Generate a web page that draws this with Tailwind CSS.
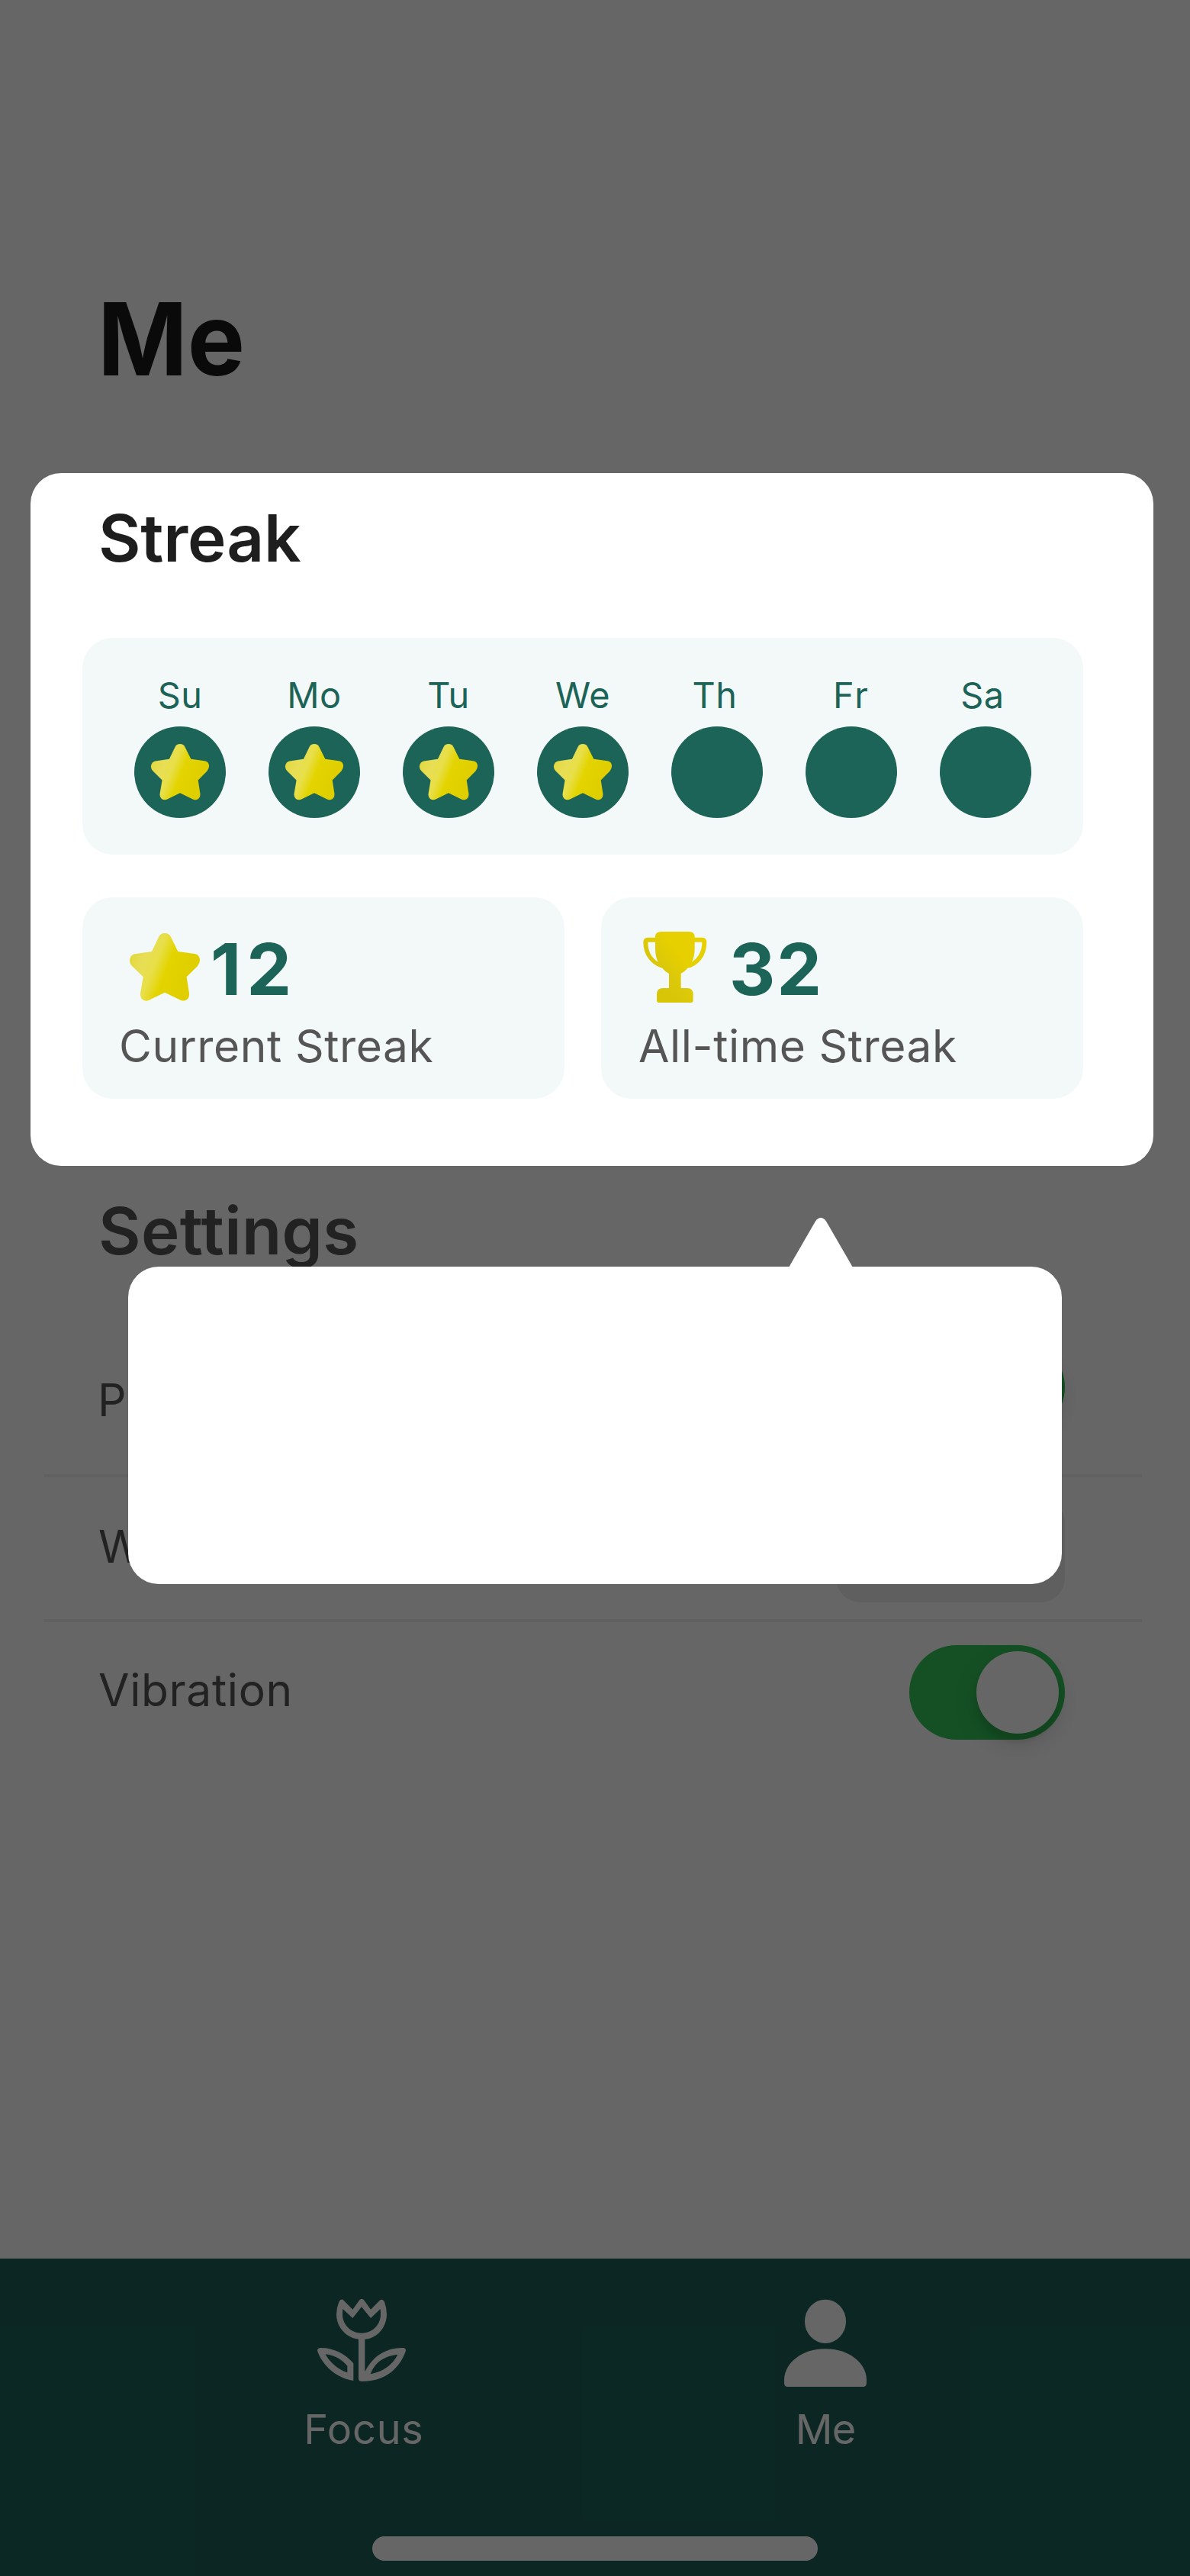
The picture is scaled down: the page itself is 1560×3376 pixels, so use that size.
<!DOCTYPE html>
<html lang="en">
<head>
<meta charset="utf-8">
<title>Me</title>
<script src="https://cdn.jsdelivr.net/npm/@tailwindcss/browser@4"></script>
</head>
<body class="bg-white">
<svg class="absolute size-0" aria-hidden="true">
  <defs>
    <linearGradient id="starFill" gradientUnits="userSpaceOnUse" x1="70" y1="110" x2="320" y2="210">
      <stop offset="0" stop-color="#e3d83c"/>
      <stop offset=".2" stop-color="#e7de56"/>
      <stop offset=".38" stop-color="#e8df48"/>
      <stop offset=".56" stop-color="#e3d400"/>
      <stop offset="1" stop-color="#dfcd00"/>
    </linearGradient>
    <linearGradient id="cupFill" gradientUnits="userSpaceOnUse" x1="185" y1="270" x2="290" y2="190">
      <stop offset="0" stop-color="#d9c508"/>
      <stop offset=".4" stop-color="#dbc80a"/>
      <stop offset="1" stop-color="#e6d000"/>
    </linearGradient>
    <path id="star" fill="url(#starFill)" d="M174 54Q181 39 198 39Q215 39 222 54L250 111L316 120Q333 123 336 141Q337 156 327 168L284 211L294 276Q295 294 284 301Q270 308 257 301L198 272L139 301Q124 309 112 301Q101 293 102 276L113 211L69 168Q58 156 60 143Q64 124 80 121L147 111Z"/>
  </defs>
</svg>

<div class="relative flex h-[3376px] w-[1560px] flex-col overflow-hidden bg-white font-['Inter',sans-serif]">
  <main class="flex h-[2960px] flex-col">
    <h1 class="mt-[364px] ml-32 h-40 w-fit origin-left scale-x-[.958] text-[132px] leading-[160px] font-bold text-[#1a1a1a]">Me</h1>

    <section class="relative z-20 mt-24 ml-10 h-[908px] w-[1472px] rounded-[40px] bg-white pt-[33px] pl-17">
      <h2 class="ml-[21px] text-[85.3px] leading-[104px] font-semibold tracking-[-.16px] text-[#1e1e1e]">Streak</h2>

      <div class="mt-[79px] flex h-[284px] w-[1312px] gap-14 rounded-[40px] bg-[#f3f9f8] pt-[47px] pl-17 text-[46.8px] leading-14 tracking-[.5px] text-[#1c6358]">
        <div class="flex w-30 flex-col items-center gap-[13px]"><span>Su</span><span class="size-30 rounded-full bg-[#1c6358]"><svg class="size-30" viewBox="-19.8 -44.5 435.6 435.6"><use href="#star"/></svg></span></div>
        <div class="flex w-30 flex-col items-center gap-[13px]"><span>Mo</span><span class="size-30 rounded-full bg-[#1c6358]"><svg class="size-30" viewBox="-19.8 -44.5 435.6 435.6"><use href="#star"/></svg></span></div>
        <div class="flex w-30 flex-col items-center gap-[13px]"><span>Tu</span><span class="size-30 rounded-full bg-[#1c6358]"><svg class="size-30" viewBox="-19.8 -44.5 435.6 435.6"><use href="#star"/></svg></span></div>
        <div class="flex w-30 flex-col items-center gap-[13px]"><span>We</span><span class="size-30 rounded-full bg-[#1c6358]"><svg class="size-30" viewBox="-19.8 -44.5 435.6 435.6"><use href="#star"/></svg></span></div>
        <div class="flex w-30 flex-col items-center gap-[13px]"><span class="mr-1.5">Th</span><span class="size-30 rounded-full bg-[#1c6358]"></span></div>
        <div class="flex w-30 flex-col items-center gap-[13px]"><span class="tracking-[2px]">Fr</span><span class="size-30 rounded-full bg-[#1c6358]"></span></div>
        <div class="flex w-30 flex-col items-center gap-[13px]"><span class="mr-2">Sa</span><span class="size-30 rounded-full bg-[#1c6358]"></span></div>
      </div>

      <div class="mt-14 grid w-[1312px] grid-cols-2 gap-12">
        <div class="h-[264px] rounded-[40px] bg-[#f3f9f8] pt-[38px] pl-12">
          <div class="flex items-center">
            <svg class="size-30 -my-1" viewBox="18 0 360 360"><use href="#star"/></svg>
            <span class="text-[93.5px] leading-28 font-bold tracking-[7px] text-[#1c6358]">12</span>
          </div>
          <p class="mt-[9px] text-[58.7px] leading-18 tracking-[.58px] text-[#555]">Current Streak</p>
        </div>
        <div class="h-[264px] rounded-[40px] bg-[#f3f9f8] pt-[38px] pl-12">
          <div class="flex items-center">
            <svg class="size-30 -my-1" viewBox="108 45 360 360"><path fill="url(#cupFill)" fill-rule="evenodd" d="M177 98Q177 78 200 78H310Q332 78 332 98V101H362Q379 101 379 119Q379 160 357 188Q335 215 303 222Q293 236 278 243V300H302Q326 300 326 325V348Q326 357 317 357H192Q183 357 183 348V325Q183 300 207 300H231V243Q215 236 206 222Q172 212 152 186Q130 158 130 119Q130 101 148 101H177ZM148 119H177V145Q177 175 188 197Q148 172 148 119ZM332 119H361Q361 170 321 197Q332 175 332 145Z"/></svg>
            <span class="text-[93.5px] leading-28 font-bold tracking-[2px] text-[#1c6358]">32</span>
          </div>
          <p class="mt-[9px] ml-px text-[58.7px] leading-18 tracking-[.56px] text-[#555]">All-time Streak</p>
        </div>
      </div>
    </section>

    <h2 class="mt-[33px] ml-[129px] text-[85.3px] leading-[104px] font-semibold tracking-[.42px] text-[#555]">Settings</h2>

    <ul class="mt-[39px] ml-[58px] w-[1439px] text-[58.7px] leading-18 tracking-[.65px] text-[#555]">
      <li class="flex h-[232px] items-center justify-between border-b-4 border-[#f2f2f2] pr-[101px] pl-[70px]">
        <span class="mt-[33px]">P</span>
        <span class="flex h-31 w-51 items-center justify-end rounded-full bg-[#34c759] pr-2"><i class="size-27 rounded-full bg-white shadow-[0_12px_32px_rgba(0,0,0,.15),0_12px_4px_rgba(0,0,0,.06)]"></i></span>
      </li>
      <li class="flex h-[190px] items-center justify-between border-b-4 border-[#f2f2f2] pr-[101px] pl-[71px]">
        <span class="-mt-[5px]">W</span>
        <span class="mt-1.5 h-34 w-75 rounded-[32px] bg-[#eee]"></span>
      </li>
      <li class="flex h-[184px] items-center justify-between pr-[101px] pl-[71px]">
        <span class="-mt-[7px]">Vibration</span>
        <span class="flex h-31 w-51 items-center justify-end rounded-full bg-[#34c759] pr-2"><i class="size-27 rounded-full bg-white shadow-[0_12px_32px_rgba(0,0,0,.15),0_12px_4px_rgba(0,0,0,.06)]"></i></span>
      </li>
    </ul>
  </main>

  <nav class="flex h-[416px] flex-col items-center bg-[#1e6359] pt-10 pb-5 text-white">
    <div class="flex w-full gap-[300px] pl-80 text-[54px] leading-16">
      <a class="flex w-[308px] flex-col items-center gap-3">
        <svg class="h-35 w-30" viewBox="102 180 360 420" fill="currentColor" fill-rule="evenodd">
          <path d="M193 230Q202 214 212 225L247 260L274 223Q282 213 291 223L318 260L353 225Q364 215 372 230Q381 255 381 280C381 332 340 375 295 377V505C330 435 385 411 445 411Q456 411 456 422C430 500 365 543 284 543Q270 543 270 532V377C225 373 183 332 183 280Q183 255 193 230ZM208 258Q207 268 207 280C207 320 240 353 282 353C325 353 357 320 357 280Q357 268 356 258L318 294L282 250L247 294ZM317 514C367 505 404 478 424 437C370 443 333 470 317 514Z"/>
          <path d="M108 422Q108 411 122 411C172 411 220 435 250 472V540C185 530 128 482 108 422ZM140 436C158 470 190 497 226 508V482C205 458 180 441 140 436Z"/>
        </svg>
        <span class="ml-1.5 tracking-[.77px]">Focus</span>
      </a>
      <a class="flex w-[308px] flex-col items-center gap-3">
        <svg class="h-35 w-30" viewBox="126 180 360 420" fill="currentColor">
          <ellipse cx="306" cy="307" rx="81" ry="86"/>
          <path d="M144 535C147 468 215 415 306 415S465 468 468 535V548Q468 564 454 564H158Q144 564 144 548Z"/>
        </svg>
        <span class="tracking-[-.78px]">Me</span>
      </a>
    </div>
    <div class="mt-auto h-8 w-146 rounded-full bg-white"></div>
  </nav>

  <!-- dimmed backdrop -->
  <div class="absolute inset-0 z-10 bg-black/60"></div>

  <!-- tooltip -->
  <div class="absolute top-[1660px] left-42 z-20 h-104 w-306 rounded-[40px] bg-white">
    <svg class="absolute -top-16 left-[866px] h-[65px] w-[84px]" viewBox="0 0 84 65" fill="#fff"><path d="M0 65L35 4.5Q38 0 42 0Q46 0 49 4.5L84 65Z"/></svg>
  </div>
</div>
</body>
</html>
